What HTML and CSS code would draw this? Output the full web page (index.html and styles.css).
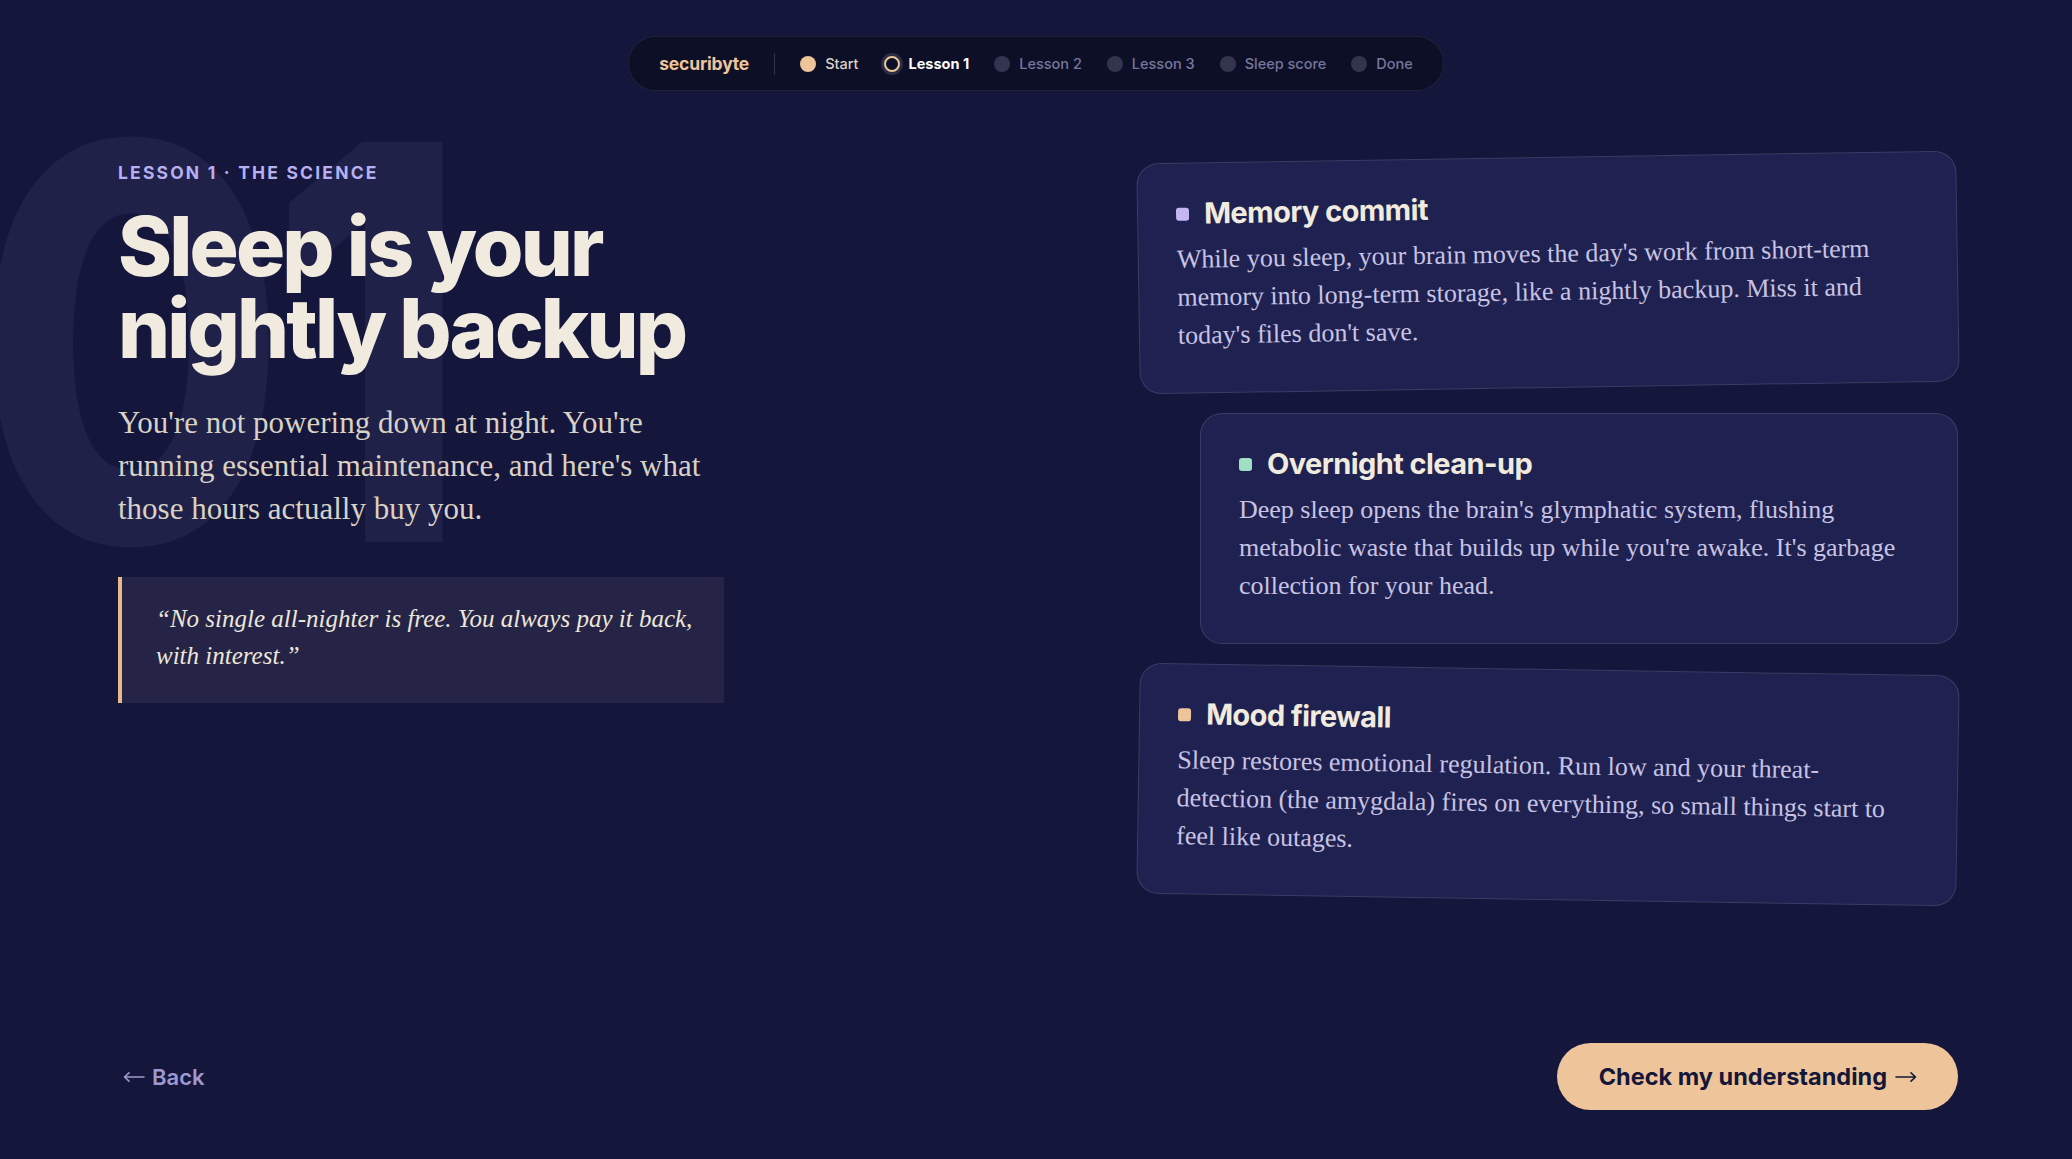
FILE: index.html
```html
<!DOCTYPE html>
<html lang="en">
<head>
    <meta charset="UTF-8">
    <meta name="viewport" content="width=device-width, initial-scale=1.0">
    <title>Lesson 1 · The science</title>
    <link rel="stylesheet" href="styles.css">
</head>
<body>
<header class="topbar">
    <nav class="steps">
        <span class="brand">securibyte</span>
        <span class="divider"></span>
        <span class="step done"><i class="dot"></i>Start</span>
        <span class="step current"><i class="dot"></i>Lesson 1</span>
        <span class="step"><i class="dot"></i>Lesson 2</span>
        <span class="step"><i class="dot"></i>Lesson 3</span>
        <span class="step"><i class="dot"></i>Sleep score</span>
        <span class="step"><i class="dot"></i>Done</span>
    </nav>
</header>

<main class="lesson">
    <section class="intro">
        <span class="bignum">01</span>
        <p class="eyebrow">Lesson 1 · The science</p>
        <h1>Sleep is your nightly backup</h1>
        <p class="lead">You're not powering down at night. You're running essential maintenance, and here's what those hours actually buy you.</p>
        <blockquote>“No single all-nighter is free. You always pay it back, with interest.”</blockquote>
    </section>

    <section class="facts">
        <article class="fact tilt-left">
            <h2><i class="mark lilac"></i>Memory commit</h2>
            <p>While you sleep, your brain moves the day's work from short-term memory into long-term storage, like a nightly backup. Miss it and today's files don't save.</p>
        </article>
        <article class="fact shifted">
            <h2><i class="mark mint"></i>Overnight clean-up</h2>
            <p>Deep sleep opens the brain's glymphatic system, flushing metabolic waste that builds up while you're awake. It's garbage collection for your head.</p>
        </article>
        <article class="fact tilt-right">
            <h2><i class="mark peach"></i>Mood firewall</h2>
            <p>Sleep restores emotional regulation. Run low and your threat-detection (the amygdala) fires on everything, so small things start to feel like outages.</p>
        </article>
    </section>
</main>

<footer class="actions">
    <a class="back" href="#">
        <svg class="arrow" width="22" height="12" viewBox="0 0 22 12"><path d="M21 6H1.5M6 1.8L1.5 6 6 10.2"/></svg>
        Back
    </a>
    <button class="next" type="button">
        Check my understanding
        <svg class="arrow" width="22" height="12" viewBox="0 0 22 12"><path d="M1 6h19.5M16 1.8L20.5 6 16 10.2"/></svg>
    </button>
</footer>
</body>
</html>
```

FILE: styles.css
```css
body {
    background-color: #14163b;
    color: #efe9dd;
    font-family: Inter, "Liberation Sans", sans-serif;
    margin: 0;
    height: 100vh;
    display: flex;
    flex-direction: column;
    overflow: hidden;
}

/* top progress pill */
.topbar {
    display: flex;
    justify-content: center;
    padding-top: 36px;
}
.steps {
    display: flex;
    align-items: center;
    gap: 25px;
    height: 53px;
    padding: 0 30px;
    background: #0d0f27;
    border: 1px solid rgba(255, 255, 255, 0.08);
    border-radius: 28px;
}
.brand {
    color: #eec59a;
    font-weight: 700;
    font-size: 17.5px;
    letter-spacing: -0.01em;
}
.divider {
    width: 1px;
    height: 22px;
    background: rgba(255, 255, 255, 0.15);
}
.step {
    display: flex;
    align-items: center;
    gap: 9px;
    font-size: 14.5px;
    font-weight: 500;
    color: #77769c;
}
.dot {
    width: 16px;
    height: 16px;
    border-radius: 50%;
    background: #33354f;
    box-sizing: border-box;
}
.step.done { color: #d8d1c4; }
.step.done .dot { background: #eec59a; }
.step.current { color: #ffffff; font-weight: 700; }
.step.current .dot {
    background: #0d0f27;
    border: 2px solid #eec59a;
    box-shadow: 0 0 0 3px #2b2d45;
}

/* main two columns */
.lesson {
    flex: 1;
    display: flex;
    justify-content: space-between;
    align-items: flex-start;
    padding: 66px 114px 0 118px;
}
.intro {
    position: relative;
    width: 620px;
    padding-top: 6px;
}
.intro > * {
    position: relative;
}
.bignum {
    position: absolute !important;
    top: -90px;
    left: -143px;
    font-weight: 800;
    font-size: 550px;
    line-height: 1;
    letter-spacing: -0.04em;
    color: #1f2149;
    transform: scaleX(0.82);
    transform-origin: left top;
    user-select: none;
}
.eyebrow {
    margin: 0;
    font-size: 17.5px;
    line-height: 20px;
    font-weight: 700;
    letter-spacing: 0.125em;
    text-transform: uppercase;
    color: #b8aff0;
}
h1 {
    margin: 23px 0 0;
    font-weight: 800;
    font-size: 82px;
    line-height: 82px;
    letter-spacing: -0.035em;
    color: #f1ebdf;
}
.lead {
    margin: 31px 0 0;
    width: 600px;
    font-family: "Liberation Serif", "DejaVu Serif", serif;
    font-size: 31px;
    line-height: 43px;
    color: #d8d1c4;
}
blockquote {
    margin: 47px 0 0;
    width: 606px;
    box-sizing: border-box;
    padding: 23px 30px 29px 34px;
    background: #262446;
    border-left: 4px solid #e8b98a;
    font-family: "Liberation Serif", "DejaVu Serif", serif;
    font-style: italic;
    font-size: 25px;
    line-height: 37px;
    color: #ece6da;
}

/* fact cards */
.facts {
    display: flex;
    flex-direction: column;
    align-items: flex-end;
    gap: 25px;
    width: 820px;
}
.fact {
    width: 820px;
    box-sizing: border-box;
    padding: 33px 38px 38px;
    background: #1f2250;
    border: 1px solid rgba(255, 255, 255, 0.12);
    border-radius: 22px;
}
.fact.shifted { width: 758px; }
.tilt-left { transform: rotate(-0.9deg); }
.tilt-right { transform: rotate(0.9deg); }
.fact h2 {
    display: flex;
    align-items: center;
    gap: 15px;
    margin: 0 0 10px;
    font-size: 29px;
    line-height: 34px;
    font-weight: 700;
    letter-spacing: -0.02em;
    color: #f1ebdf;
}
.mark {
    width: 13px;
    height: 13px;
    border-radius: 3px;
}
.mark.lilac { background: #c4b6f2; }
.mark.mint { background: #9fe0c4; }
.mark.peach { background: #eec59a; }
.fact p {
    margin: 0;
    max-width: 722px;
    font-family: "Liberation Serif", "DejaVu Serif", serif;
    font-size: 26px;
    line-height: 38px;
    color: #c8c3e4;
}

/* bottom actions */
.actions {
    display: flex;
    justify-content: space-between;
    align-items: center;
    padding: 0 114px 49px 123px;
}
.back {
    display: flex;
    align-items: center;
    gap: 7px;
    color: #9e99d0;
    text-decoration: none;
    font-size: 22px;
    font-weight: 600;
}
.next {
    display: flex;
    align-items: center;
    gap: 8px;
    height: 67px;
    padding: 0 41px 0 42px;
    border: none;
    border-radius: 34px;
    background: #eec49a;
    color: #151739;
    font-family: Inter, "Liberation Sans", sans-serif;
    font-size: 23.5px;
    font-weight: 700;
    cursor: pointer;
}
.arrow {
    fill: none;
    stroke: currentColor;
    stroke-width: 1.6;
    stroke-linecap: round;
    stroke-linejoin: round;
}
```
